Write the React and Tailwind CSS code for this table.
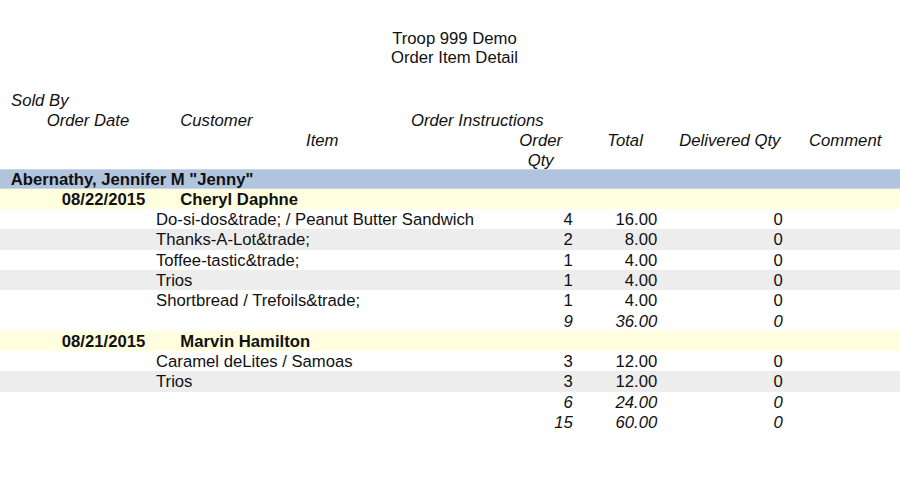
const font = "font-['Liberation_Sans',Arial,sans-serif]";

const orders = [
  {
    date: "08/22/2015",
    customer: "Cheryl Daphne",
    items: [
      ["Do-si-dos&trade; / Peanut Butter Sandwich", 4, "16.00", 0],
      ["Thanks-A-Lot&trade;", 2, "8.00", 0],
      ["Toffee-tastic&trade;", 1, "4.00", 0],
      ["Trios", 1, "4.00", 0],
      ["Shortbread / Trefoils&trade;", 1, "4.00", 0],
    ],
    total: [9, "36.00", 0],
  },
  {
    date: "08/21/2015",
    customer: "Marvin Hamilton",
    items: [
      ["Caramel deLites / Samoas", 3, "12.00", 0],
      ["Trios", 3, "12.00", 0],
    ],
    total: [6, "24.00", 0],
  },
];

/* ── NumberRow ───────────────────────────────────── */
function NumberRow({ label = "", qty, total, delivered, className = "" }) {
  return (
    <div className={`flex h-[20.3px] pt-[2px] items-center whitespace-nowrap ${className}`}>
      <div className="w-[156px] shrink-0" />
      <div className="w-[360px] shrink-0">{label}</div>
      <div className="w-[56.7px] shrink-0 text-right">{qty}</div>
      <div className="w-[84.6px] shrink-0 text-right">{total}</div>
      <div className="w-[125.4px] shrink-0 text-right">{delivered}</div>
    </div>
  );
}

export default function App() {
  return (
    <div className={`w-[900px] h-[477px] bg-white text-[16.7px] leading-[20.3px] text-[#111] ${font}`}>
      {/* title */}
      <div className="pt-[28.5px] text-center leading-[19.5px] pl-[9px]">
        <div>Troop 999 Demo</div>
        <div>Order Item Detail</div>
      </div>

      {/* column headers */}
      <div className="mt-[23px] h-[78px] italic leading-[20px] whitespace-nowrap">
        <div className="pl-[11px]">Sold By</div>
        <div className="flex">
          <div className="w-[46.7px] shrink-0" />
          <div className="w-[133.6px] shrink-0">Order Date</div>
          <div className="w-[230.7px] shrink-0">Customer</div>
          <div>Order Instructions</div>
        </div>
        <div className="flex">
          <div className="w-[306px] shrink-0" />
          <div className="w-[204px] shrink-0">Item</div>
          <div className="w-[61.4px] shrink-0 text-center">Order</div>
          <div className="w-[35.9px] shrink-0" />
          <div className="w-[72px] shrink-0">Total</div>
          <div className="w-[129.7px] shrink-0">Delivered Qty</div>
          <div>Comment</div>
        </div>
        <div className="flex h-[18px]">
          <div className="w-[510px] shrink-0" />
          <div className="w-[61.4px] shrink-0 text-center">Qty</div>
        </div>
      </div>

      {/* seller band */}
      <div className="h-[20.3px] pt-[2px] bg-[#b0c4de] pl-[10.7px] font-bold flex items-center border-y border-[#c9d6e8]">
        Abernathy, Jennifer M "Jenny"
      </div>

      {orders.map((o) => (
        <div key={o.date}>
          <div className="flex h-[20.3px] pt-[2px] items-center bg-[#ffffe0] font-bold whitespace-nowrap">
            <div className="w-[145.3px] shrink-0 text-right">{o.date}</div>
            <div className="w-[35px] shrink-0" />
            <div>{o.customer}</div>
          </div>
          {o.items.map((it, i) => (
            <NumberRow
              key={i}
              label={it[0]}
              qty={it[1]}
              total={it[2]}
              delivered={it[3]}
              className={i % 2 === 1 ? "bg-[#ededed]" : "bg-white"}
            />
          ))}
          <NumberRow
            qty={o.total[0]}
            total={o.total[1]}
            delivered={o.total[2]}
            className="italic"
          />
        </div>
      ))}
      <NumberRow qty={15} total="60.00" delivered={0} className="italic" />
    </div>
  );
}
